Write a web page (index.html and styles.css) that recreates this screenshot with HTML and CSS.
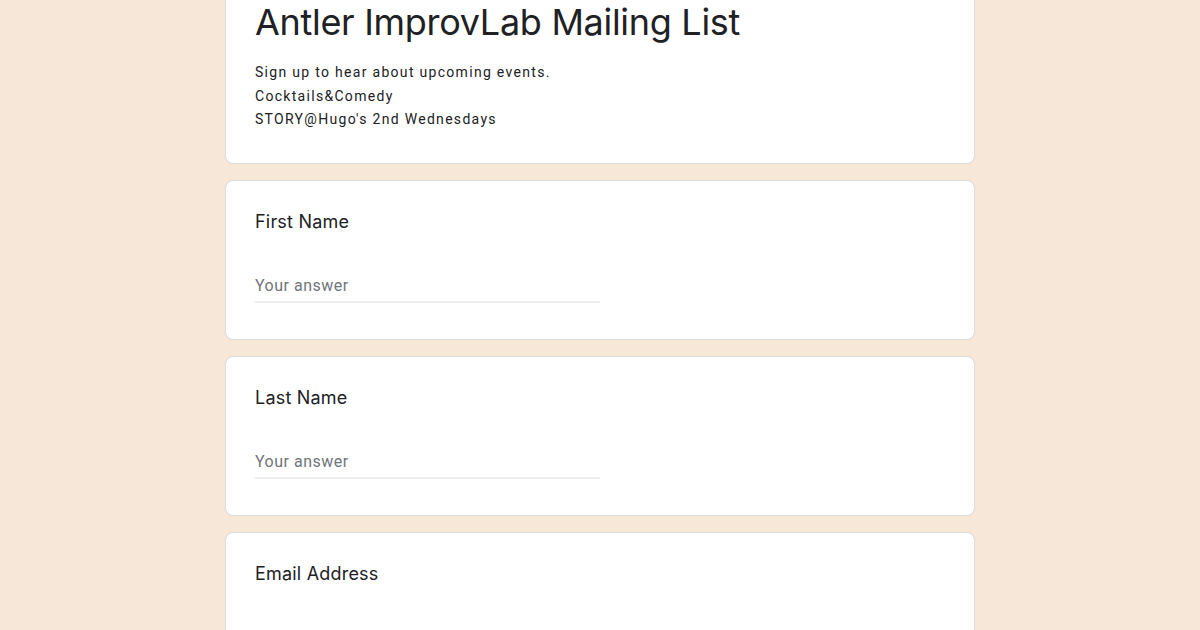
FILE: index.html
```html
<!DOCTYPE html>
<html lang="en">
<head>
<meta charset="utf-8">
<title>Antler ImprovLab Mailing List</title>
<link rel="stylesheet" href="styles.css">
</head>
<body>
<main class="form">
  <section class="card header-card">
    <h1 class="title">Antler ImprovLab Mailing List</h1>
    <div class="desc">
      <div>Sign up to hear about upcoming events.</div>
      <div>Cocktails&amp;Comedy</div>
      <div>STORY@Hugo's 2nd Wednesdays</div>
    </div>
  </section>
  <section class="card question">
    <div class="q-label">First Name</div>
    <div class="answer"><span class="placeholder">Your answer</span></div>
  </section>
  <section class="card question">
    <div class="q-label">Last Name</div>
    <div class="answer"><span class="placeholder">Your answer</span></div>
  </section>
  <section class="card question">
    <div class="q-label">Email Address</div>
    <div class="answer"><span class="placeholder">Your answer</span></div>
  </section>
</main>
</body>
</html>
```
FILE: styles.css
```css
html, body {
  margin: 0;
  padding: 0;
}
body {
  background: #f6e7d9;
  font-family: Roboto, "Liberation Sans", sans-serif;
  color: #202124;
  overflow: hidden;
  height: 630px;
}
.form {
  width: 750px;
  margin: -41px auto 0;
  display: flex;
  flex-direction: column;
  gap: 16px;
}
.card {
  background: #fff;
  border: 1px solid #dadce0;
  border-radius: 8px;
  box-sizing: border-box;
}
.header-card {
  padding: 42px 29px 31px;
}
.title {
  margin: 0;
  font-family: Inter, "Open Sans", sans-serif;
  font-weight: 400;
  font-size: 36px;
  line-height: 40px;
  letter-spacing: -0.3px;
}
.desc {
  margin-top: 19px;
  font-size: 14px;
  line-height: 23.5px;
  letter-spacing: 1.3px;
}
.question {
  height: 160px;
  padding: 29px 29px 0;
}
.q-label {
  font-family: Inter, "Open Sans", sans-serif;
  font-size: 18px;
  line-height: 24px;
  letter-spacing: 0.2px;
}
.answer {
  width: 50%;
  margin-top: 40px;
  border-bottom: 2px solid #eeeeee;
  padding-bottom: 3px;
}
.placeholder {
  font-size: 16px;
  line-height: 24px;
  color: #70757a;
  letter-spacing: 0.5px;
}
```
